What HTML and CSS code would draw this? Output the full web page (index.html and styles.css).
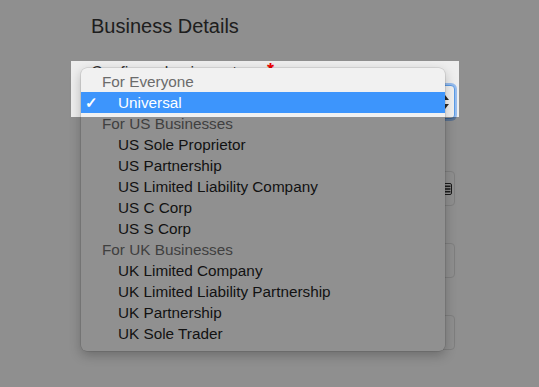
FILE: index.html
```html
<!DOCTYPE html>
<html lang="en">
<head>
    <meta charset="UTF-8">
    <meta name="viewport" content="width=device-width, initial-scale=1.0">
    <title>Business Details</title>
    <link rel="stylesheet" href="styles.css">
</head>
<body>
    <div class="page">
        <h2 class="title">Business Details</h2>

        <div class="field field-select">
            <label>Configure business type <span class="req">*</span></label>
            <div class="select">
                <svg class="stepper" width="8" height="14" viewBox="0 0 8 14">
                    <path d="M4 0 L8 5 L0 5 Z" fill="#2b2b2b"/>
                    <path d="M0 9 L8 9 L4 14 Z" fill="#2b2b2b"/>
                </svg>
            </div>
        </div>

        <div class="field">
            <div class="input">
                <svg class="autofill" width="14" height="12" viewBox="0 0 14 12">
                    <rect x="0.5" y="0.5" width="13" height="11" rx="1.5" fill="none" stroke="#2b2b2b"/>
                    <rect x="4" y="2.5" width="8.5" height="1.6" fill="#2b2b2b"/>
                    <rect x="4" y="5.2" width="8.5" height="1.6" fill="#2b2b2b"/>
                    <rect x="4" y="7.9" width="8.5" height="1.6" fill="#2b2b2b"/>
                </svg>
            </div>
        </div>

        <div class="field">
            <div class="input"></div>
        </div>

        <div class="field">
            <div class="input"></div>
        </div>
    </div>

    <ul class="menu">
        <li class="group">For Everyone</li>
        <li class="option selected"><span class="check">✓</span>Universal</li>
        <li class="group">For US Businesses</li>
        <li class="option">US Sole Proprietor</li>
        <li class="option">US Partnership</li>
        <li class="option">US Limited Liability Company</li>
        <li class="option">US C Corp</li>
        <li class="option">US S Corp</li>
        <li class="group">For UK Businesses</li>
        <li class="option">UK Limited Company</li>
        <li class="option">UK Limited Liability Partnership</li>
        <li class="option">UK Partnership</li>
        <li class="option">UK Sole Trader</li>
    </ul>
    <div class="spotlight"></div>
</body>
</html>
```

FILE: styles.css
```css
body {
    margin: 0;
    height: 100vh;
    overflow: hidden;
    background: #eeeeee;
    font-family: "Liberation Sans", Arial, sans-serif;
    color: #333;
}
.page {
    padding: 14px 0 0 91px;
    width: 364px;
}
.title {
    margin: 0 0 26px;
    font-size: 20px;
    line-height: 24px;
    font-weight: 400;
    color: #333;
}
.field {
    padding-top: 37px;
}
.field-select {
    padding-top: 0;
    margin-bottom: 15px;
}
.field label {
    display: block;
    height: 18px;
    font-size: 16px;
    line-height: 18px;
    margin-bottom: 3px;
    color: #333;
}
.req {
    color: #f00000;
    font-size: 18px;
    font-weight: 700;
    line-height: 0;
    vertical-align: 2px;
}
.select {
    height: 34px;
    border: 1px solid #5b9be6;
    border-radius: 4px;
    box-sizing: border-box;
    background: #f2f2f2;
    box-shadow: 0 0 0 2px rgba(80, 150, 240, 0.55);
    display: flex;
    align-items: center;
    justify-content: flex-end;
    padding-right: 5px;
}
.input {
    height: 35px;
    box-sizing: border-box;
    border: 1px solid #d4d4d4;
    border-radius: 4px;
    display: flex;
    align-items: center;
    justify-content: flex-end;
    padding-right: 2px;
}
.menu {
    position: absolute;
    left: 81px;
    top: 68px;
    width: 364px;
    margin: 0;
    padding: 3px 0 7px;
    list-style: none;
    background: #f1f1f1;
    border-radius: 6px;
    box-shadow: 0 0 0 0.5px rgba(0, 0, 0, 0.16), 0 4px 12px rgba(0, 0, 0, 0.25);
    font-size: 15.3px;
}
.menu li {
    height: 21px;
    line-height: 21px;
    white-space: nowrap;
}
.group {
    padding-left: 21px;
    color: #6b6b6b;
}
.option {
    position: relative;
    padding-left: 37px;
    color: #1e1e1e;
}
.option.selected {
    background: #3d95fc;
    color: #fff;
}
.check {
    position: absolute;
    left: 4px;
    font-weight: 700;
}
.spotlight {
    position: absolute;
    left: 71px;
    top: 61px;
    width: 388px;
    height: 56px;
    box-shadow: 0 0 0 1200px rgba(0, 0, 0, 0.4);
    pointer-events: none;
}
```
